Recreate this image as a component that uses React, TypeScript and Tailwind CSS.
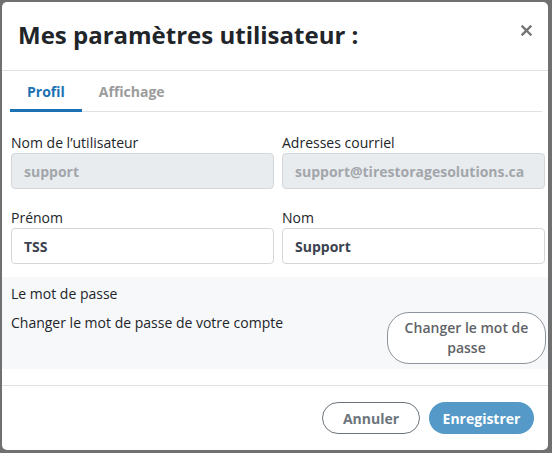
import React from "react";

type Field = {
	label: string;
	value: string;
	disabled?: boolean;
};

const FIELDS: Field[] = [
	{ label: "Nom de l’utilisateur", value: "support", disabled: true },
	{ label: "Adresses courriel", value: "support@tirestoragesolutions.ca", disabled: true },
	{ label: "Prénom", value: "TSS" },
	{ label: "Nom", value: "Support" },
];

function CloseIcon() {
	return (
		<svg width="11" height="11" viewBox="0 0 11 11" aria-hidden="true">
			<path d="M1.5 1.5 L9.5 9.5 M9.5 1.5 L1.5 9.5" stroke="#757575" strokeWidth="2.4" strokeLinecap="square" />
		</svg>
	);
}

function FormField({ label, value, disabled }: Field) {
	return (
		<div className="flex flex-col">
			<label className="text-[14px] leading-[21px] text-[#212529]">{label}</label>
			<input
				readOnly
				disabled={disabled}
				value={value}
				className={
					disabled
						? "h-[36px] w-full rounded-[4px] border border-[#d3d6da] bg-[#e9ecef] px-3 text-[14px] font-bold text-[#a2a6ab] outline-none"
						: "h-[36px] w-full rounded-[4px] border border-[#d3d6da] bg-white px-3 text-[14px] font-bold text-[#3b4250] outline-none"
				}
			/>
		</div>
	);
}

export default function App() {
	return (
		<div className="h-[453px] w-[552px] bg-[#707070] pt-[2px] pr-[4px] pb-[3px] pl-[2px] font-['Open_Sans',sans-serif]">
			<div className="flex h-full flex-col overflow-hidden rounded-[5px] bg-white">
				{/* Header */}
				<div className="flex h-[69px] shrink-0 items-center justify-between border-b border-[#dee2e6] px-4">
					<h2 className="-mt-[2px] text-[24px] font-bold leading-[1.2] text-[#212529]">
						Mes paramètres utilisateur :
					</h2>
					<button type="button" className="mt-[23px] self-start" aria-label="Fermer">
						<CloseIcon />
					</button>
				</div>

				{/* Body */}
				<div className="shrink-0 pt-[2px] pb-4">
					<div className="pr-[6px] pl-2">
						<div className="flex border-b border-[#dee2e6]">
							<div className="-mb-px border-b-[3px] border-[#1b72b4] px-[17px] pt-2 pb-[7px] text-[14px] font-bold leading-[21px] text-[#1b72b4]">
								Profil
							</div>
							<div className="-mb-px border-b-[3px] border-transparent px-[17px] pt-2 pb-[7px] text-[14px] font-bold leading-[21px] text-[#9b9b9b]">
								Affichage
							</div>
						</div>
					</div>

					<div className="mt-[20px] grid grid-cols-2 gap-x-2 gap-y-[18px] pr-[3px] pl-[9px]">
						{FIELDS.map((f) => (
							<FormField key={f.label} {...f} />
						))}
					</div>

					<div className="mt-[13px] bg-[#f7f8fa] pt-[6px] pr-[2px] pb-[5px] pl-[9px] text-[14px] leading-[21px] text-[#212529]">
						<p>Le mot de passe</p>
						<div className="mt-2 flex items-start justify-between">
							<span>Changer le mot de passe de votre compte</span>
							<button
								type="button"
								className="w-[159px] rounded-[22px] border border-[#8d939a] bg-white px-3 py-[5px] text-[14px] font-semibold leading-[20px] text-[#5f6368]"
							>
								Changer le mot de passe
							</button>
						</div>
					</div>
				</div>

				{/* Footer */}
				<div className="flex flex-1 items-center justify-end gap-[9px] border-t border-[#dee2e6] pr-[14px]">
					<button
						type="button"
						className="h-[32px] w-[98px] rounded-full border border-[#6c757d] bg-white text-[14px] font-bold text-[#6c757d]"
					>
						Annuler
					</button>
					<button
						type="button"
						className="h-[32px] w-[105px] rounded-full bg-[#5499c7] text-[14px] font-bold text-white"
					>
						Enregistrer
					</button>
				</div>
			</div>
		</div>
	);
}
